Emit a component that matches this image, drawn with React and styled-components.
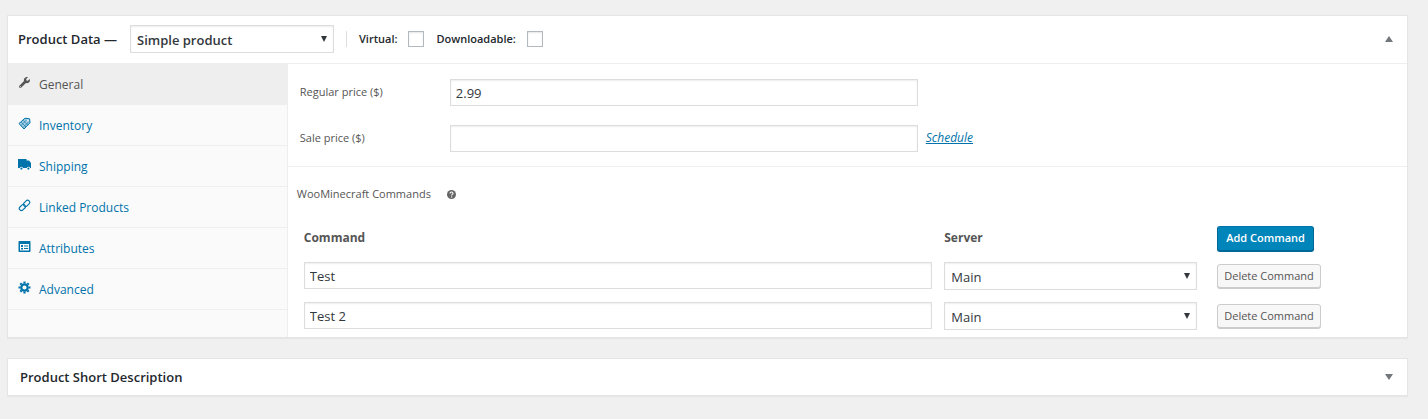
import React from 'react';
import styled, { createGlobalStyle } from 'styled-components';
import { FaWrench } from 'react-icons/fa';

const GlobalStyle = createGlobalStyle`
  *, *::before, *::after { box-sizing: border-box; }
  body {
    margin: 0;
    background: #f0f0f0;
    color: #444;
    font-family: "Open Sans", "Noto Sans", sans-serif;
    font-size: 13px;
    line-height: 18px;
  }
  input, select, button { font-family: inherit; margin: 0; }
`;

const Page = styled.main`
  display: flex;
  flex-direction: column;
  gap: 20px;
  padding: 15px 20px 20px 7px;
`;

const Panel = styled.section`
  background: #fff;
  border: 1px solid #e5e5e5;
  box-shadow: 0 1px 1px rgba(0, 0, 0, 0.04);
`;

const PanelHeader = styled.header`
  display: flex;
  align-items: center;
  min-height: ${(p) => (p.$tall ? 48 : 36)}px;
  padding: ${(p) => (p.$tall ? '0 13px 2px 10px' : '0 13px 0 12px')};
  border-bottom: ${(p) => (p.$tall ? '1px solid #eee' : '0')};
`;

const Title = styled.h2`
  margin: 0;
  color: #23282d;
  font-size: 13px;
  font-weight: 600;
  white-space: nowrap;
`;

const Toggle = styled.button`
  display: flex;
  margin-left: auto;
  padding: 0;
  border: 0;
  background: none;
  color: #72777c;
`;

const SelectBox = styled.div`
  position: relative;
  width: ${(p) => p.$width || '100%'};
  margin-left: ${(p) => p.$indent || 0}px;
`;

const Select = styled.select`
  display: block;
  width: 100%;
  height: 28px;
  padding: 2px 24px 0 6px;
  border: 1px solid #ddd;
  border-radius: 0;
  background: #fff;
  box-shadow: inset 0 1px 2px rgba(0, 0, 0, 0.07);
  color: #32373c;
  font-size: 13px;
  font-weight: ${(p) => (p.$strong ? 600 : 400)};
  appearance: none;
`;

const SelectArrow = styled.svg`
  position: absolute;
  top: 11px;
  right: 7px;
  pointer-events: none;
`;

const TypeOptions = styled.div`
  display: flex;
  gap: 12px;
  height: 16px;
  margin-left: 12px;
  padding-left: 12px;
  border-left: 1px solid #ddd;
`;

const CheckLabel = styled.label`
  display: flex;
  align-items: center;
  gap: 11px;
  color: #23282d;
  font-size: 11px;
  font-weight: 600;
`;

const Checkbox = styled.input`
  width: 16px;
  height: 16px;
  border: 1px solid #b4b9be;
  background: #fff;
  box-shadow: inset 0 1px 2px rgba(0, 0, 0, 0.1);
  appearance: none;
`;

const PanelBody = styled.div`
  display: flex;
`;

const Tabs = styled.nav`
  flex: 0 0 20%;
  border-right: 1px solid #eee;
  background: #fafafa;
`;

const Tab = styled.a`
  display: flex;
  gap: 8px;
  height: 41px;
  padding: 11px 10px 0;
  border-bottom: 1px solid #eee;
  background: ${(p) => (p.$active ? '#eee' : 'transparent')};
  color: ${(p) => (p.$active ? '#555' : '#0073aa')};
  font-size: 12px;
  line-height: 20px;
  text-decoration: none;
  svg { flex: none; width: 13px; height: 13px; margin-top: 1px; }
`;

const Content = styled.div`
  flex: 1;
  min-width: 0;
`;

const Prices = styled.div`
  display: flex;
  flex-direction: column;
  gap: 19px;
  padding: 15px 12px 14px;
  border-bottom: 1px solid #eee;
`;

const Field = styled.div`
  display: flex;
  align-items: center;
  gap: 8px;
`;

const FieldLabel = styled.label`
  flex: 0 0 142px;
  padding-bottom: 2px;
  color: #555;
  font-size: 11px;
`;

const TextInput = styled.input`
  display: block;
  flex: 0 1 468px;
  width: 100%;
  min-width: 0;
  height: 27px;
  padding: 0 5px;
  border: 1px solid #ddd;
  background: #fff;
  box-shadow: inset 0 1px 2px rgba(0, 0, 0, 0.07);
  color: #32373c;
  font-size: 13px;
`;

const Schedule = styled.a`
  padding-bottom: 2px;
  color: #0073aa;
  font-size: 12px;
  font-style: italic;
`;

const CommandsHeading = styled.div`
  display: flex;
  align-items: center;
  gap: 16px;
  padding: 18px 9px 16px;
  color: #555;
  font-size: 11px;
`;

const CommandTable = styled.table`
  width: calc(100% - 15px);
  margin: 0 5px 2px 10px;
  border-collapse: collapse;
  table-layout: fixed;
  th, td { height: 40px; padding: 7px 6px 5px; text-align: left; vertical-align: top; }
  th { height: 36px; padding: 2px 6px 0; color: #555; font-size: 12px; font-weight: 700; vertical-align: middle; }
  th:nth-child(1) { width: 58%; }
  th:nth-child(2) { width: 24%; }
  th:nth-child(3), td:nth-child(3) { padding-left: 14px; }
  td:nth-child(3) { padding-top: 9px; }
`;

const Button = styled.button`
  display: block;
  height: ${(p) => (p.$primary ? 25 : 24)}px;
  padding: 0 ${(p) => (p.$primary ? 8 : 6)}px 1px;
  border: 1px solid;
  border-color: ${(p) => (p.$primary ? '#0073aa #006799 #006799' : '#ccc')};
  border-radius: 3px;
  background: ${(p) => (p.$primary ? '#0085ba' : '#f7f7f7')};
  box-shadow: 0 1px 0 ${(p) => (p.$primary ? '#006799' : '#ccc')};
  color: ${(p) => (p.$primary ? '#fff' : '#555')};
  font-size: 11px;
  font-weight: ${(p) => (p.$primary ? 600 : 400)};
  white-space: nowrap;
`;

const TagIcon = () => (
  <svg viewBox="0 0 13 13" fill="none" stroke="currentColor">
    <path d="M1 6.5 7 1.2 11.6 1.8 12 5.8 6 12Z" fill="#a5cce0" strokeLinejoin="round" />
    <path d="M3 5 8 10M5 3.2 10 8.2M3 8.5 8.5 3M5 10.5 10.5 5" strokeWidth=".6" />
    <circle cx="10" cy="3.2" r=".8" fill="#fff" stroke="none" />
  </svg>
);

const TruckIcon = () => (
  <svg viewBox="0 0 13 13" fill="currentColor">
    <path d="M0 1h8.5v1.5H11l2 2.5v5h-.9a1.7 1.7 0 0 0-3.3 0H5a1.7 1.7 0 0 0-3.2 0H0Z" />
    <circle cx="3.4" cy="10.6" r="1.1" />
    <circle cx="10.4" cy="10.6" r="1.1" />
  </svg>
);

const LinkIcon = () => (
  <svg viewBox="0 0 13 13" fill="none" stroke="currentColor" strokeWidth="1.1">
    <rect x="5.1" y="2.2" width="7" height="4.2" rx="2.1" transform="rotate(-45 8.6 4.3)" />
    <rect x="0.9" y="6.4" width="7" height="4.2" rx="2.1" transform="rotate(-45 4.4 8.5)" />
  </svg>
);

const ListIcon = () => (
  <svg viewBox="0 0 13 13">
    <rect x=".5" y="1" width="12" height="11" rx=".8" fill="currentColor" />
    <path d="M2 4h9v6.5H2Z" fill="#fafafa" />
    <path d="M3 5h2v2H3zM3 8h2v1.5H3zM6 5.5h4.2v1H6zM6 8h4.2v1H6z" fill="currentColor" />
  </svg>
);

const GearIcon = () => (
  <svg viewBox="0 0 13 13" fill="none" stroke="currentColor">
    <circle cx="6.5" cy="6.5" r="3.2" strokeWidth="2.2" />
    <path d="M6.5 .5v2M6.5 10.5v2M.5 6.5h2M10.5 6.5h2M2.3 2.3l1.3 1.3M9.4 9.4l1.3 1.3M2.3 10.7l1.3-1.3M9.4 3.6l1.3-1.3" strokeWidth="2.2" />
  </svg>
);

const WrenchIcon = () => (
  <svg viewBox="0 0 13 13">
    <FaWrench x="1" y="1" size={11} style={{ width: 11, height: 11 }} />
  </svg>
);

const HelpIcon = () => (
  <svg width="9" height="9" viewBox="0 0 9 9" role="img" aria-label="Help">
    <circle cx="4.5" cy="4.5" r="4.5" fill="#666" />
    <path d="M3 3.6C3 1.6 6 1.6 6 3.4 6 4.4 4.6 4.3 4.6 5.4" fill="none" stroke="#fff" strokeWidth="1.1" />
    <circle cx="4.6" cy="6.9" r=".7" fill="#fff" />
  </svg>
);

const Arrow = () => (
  <SelectArrow width="6" height="6" viewBox="0 0 6 6" aria-hidden="true">
    <path d="M0 0h6L3 6Z" fill="#32373c" />
  </SelectArrow>
);

const Collapse = ({ open, label }) => (
  <Toggle type="button" aria-label={label} aria-expanded={open}>
    <svg width="10" height="6" viewBox="0 0 10 6" fill="currentColor">
      <path d={open ? 'M5 0 9 6H1Z' : 'M1 0h8L5 6Z'} />
    </svg>
  </Toggle>
);

const tabs = [
  ['General', WrenchIcon],
  ['Inventory', TagIcon],
  ['Shipping', TruckIcon],
  ['Linked Products', LinkIcon],
  ['Attributes', ListIcon],
  ['Advanced', GearIcon],
];

const commands = ['Test', 'Test 2'];

export default function App() {
  return (
    <>
      <GlobalStyle />
      <Page>
        <Panel>
          <PanelHeader $tall>
            <Title>Product Data —</Title>
            <SelectBox $width="204px" $indent={13}>
              <Select $strong aria-label="Product type">
                <option>Simple product</option>
              </Select>
              <Arrow />
            </SelectBox>
            <TypeOptions>
              <CheckLabel>Virtual: <Checkbox type="checkbox" /></CheckLabel>
              <CheckLabel>Downloadable: <Checkbox type="checkbox" /></CheckLabel>
            </TypeOptions>
            <Collapse open label="Toggle product data" />
          </PanelHeader>
          <PanelBody>
            <Tabs>
              {tabs.map(([name, Icon], i) => (
                <Tab key={name} href="#" $active={i === 0}>
                  <Icon />
                  {name}
                </Tab>
              ))}
            </Tabs>
            <Content>
              <Prices>
                <Field>
                  <FieldLabel htmlFor="regular">Regular price ($)</FieldLabel>
                  <TextInput id="regular" type="text" defaultValue="2.99" />
                </Field>
                <Field>
                  <FieldLabel htmlFor="sale">Sale price ($)</FieldLabel>
                  <TextInput id="sale" type="text" />
                  <Schedule href="#">Schedule</Schedule>
                </Field>
              </Prices>
              <CommandsHeading>
                WooMinecraft Commands
                <HelpIcon />
              </CommandsHeading>
              <CommandTable>
                <thead>
                  <tr>
                    <th>Command</th>
                    <th>Server</th>
                    <th><Button type="button" $primary>Add Command</Button></th>
                  </tr>
                </thead>
                <tbody>
                  {commands.map((command) => (
                    <tr key={command}>
                      <td><TextInput type="text" aria-label="Command" defaultValue={command} /></td>
                      <td>
                        <SelectBox>
                          <Select aria-label="Server"><option>Main</option></Select>
                          <Arrow />
                        </SelectBox>
                      </td>
                      <td><Button type="button">Delete Command</Button></td>
                    </tr>
                  ))}
                </tbody>
              </CommandTable>
            </Content>
          </PanelBody>
        </Panel>
        <Panel>
          <PanelHeader>
            <Title>Product Short Description</Title>
            <Collapse open={false} label="Toggle product short description" />
          </PanelHeader>
        </Panel>
      </Page>
    </>
  );
}
